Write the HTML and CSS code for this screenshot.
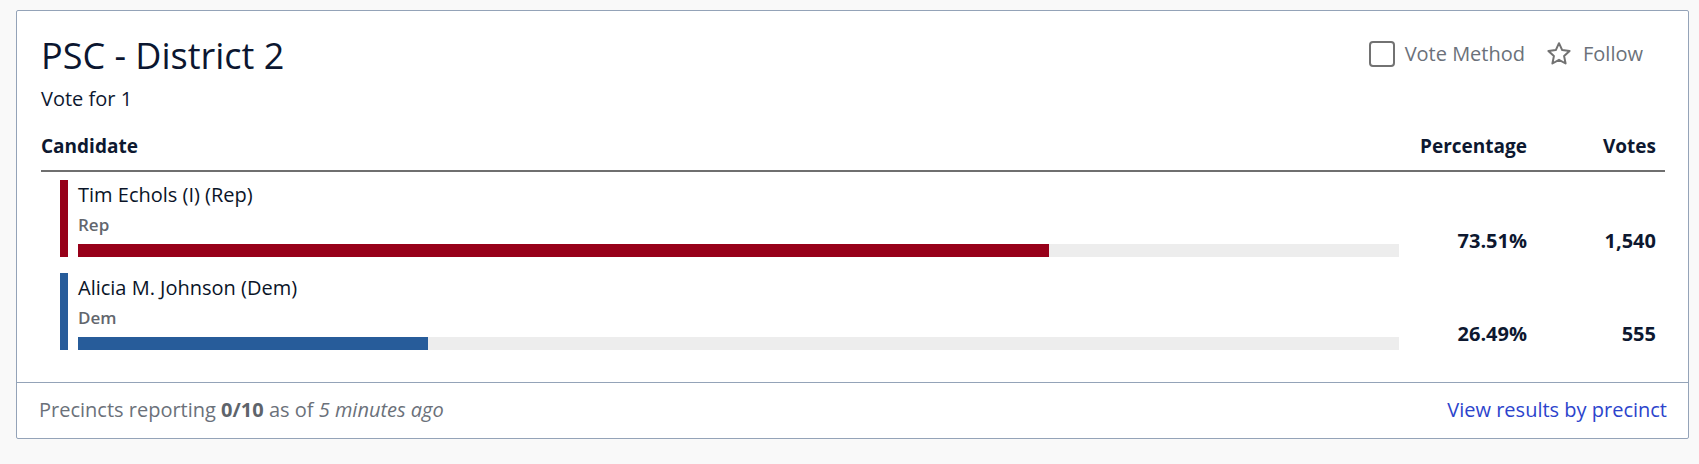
FILE: index.html
```html
<!DOCTYPE html>
<html lang="en">
<head>
<meta charset="utf-8">
<title>PSC - District 2</title>
<link rel="stylesheet" href="styles.css">
</head>
<body>
<div class="card">
  <div class="card-body">
    <div class="head">
      <div class="head-text">
        <h2 class="title">PSC - District 2</h2>
        <div class="vote-for">Vote for 1</div>
      </div>
      <div class="actions">
        <label class="action"><span class="checkbox"></span><span>Vote Method</span></label>
        <button class="action follow" type="button">
          <svg class="star" viewBox="0 0 26 26" width="26" height="26" aria-hidden="true"><path d="M13 2.2l3.2 6.9 7.4.9-5.5 5.1 1.5 7.4L13 18.8l-6.6 3.7 1.5-7.4L2.4 10l7.4-.9z"/></svg>
          <span>Follow</span>
        </button>
      </div>
    </div>
    <div class="results">
      <div class="th">Candidate</div>
      <div class="th num">Percentage</div>
      <div class="th num votes">Votes</div>

      <div class="cell cand-cell">
        <div class="cand rep">
          <div class="name">Tim Echols (I) (Rep)</div>
          <div class="party">Rep</div>
          <div class="bar"><div class="fill" style="width:73.51%"></div></div>
        </div>
      </div>
      <div class="cell num">73.51%</div>
      <div class="cell num votes">1,540</div>

      <div class="cell cand-cell">
        <div class="cand dem">
          <div class="name">Alicia M. Johnson (Dem)</div>
          <div class="party">Dem</div>
          <div class="bar"><div class="fill" style="width:26.49%"></div></div>
        </div>
      </div>
      <div class="cell num">26.49%</div>
      <div class="cell num votes">555</div>
    </div>
  </div>
  <div class="card-footer">
    <div class="reporting">Precincts reporting <strong>0/10</strong> as of <em>5 minutes ago</em></div>
    <a class="precinct-link" href="#">View results by precinct</a>
  </div>
</div>
</body>
</html>
```

FILE: styles.css
```css
html, body {
  margin: 0;
  padding: 0;
  background: #f9f9f9;
}

body {
  font-family: "Open Sans", "Noto Sans", sans-serif;
  color: #0d1830;
  padding-top: 10px;
  padding-left: 16px;
}

.card {
  box-sizing: border-box;
  width: 1673px;
  background: #ffffff;
  border: 1px solid #94a3b8;
  border-radius: 2px;
}

.card-body {
  padding: 23px 23px 24px 24px;
}

.head {
  display: flex;
  justify-content: space-between;
  align-items: flex-start;
}

.title {
  margin: 0;
  font-size: 36px;
  line-height: 44px;
  font-weight: 500;
  color: #0b1630;
}

.vote-for {
  margin-top: 7px;
  font-size: 20px;
  line-height: 28px;
}

.actions {
  display: flex;
  align-items: center;
  margin-top: 7px;
  margin-right: 22px;
}

.action {
  display: flex;
  align-items: center;
  font-family: inherit;
  font-size: 20px;
  line-height: 26px;
  color: #6b717a;
  background: none;
  border: 0;
  padding: 0;
  cursor: pointer;
}

.checkbox {
  box-sizing: border-box;
  width: 26px;
  height: 26px;
  border: 2.5px solid #727272;
  border-radius: 4px;
  margin-right: 10px;
}

.follow {
  margin-left: 21px;
}

.star {
  margin-right: 11px;
  fill: none;
  stroke: #727272;
  stroke-width: 2;
  stroke-linejoin: round;
}

.results {
  display: grid;
  grid-template-columns: 1fr 128px 138px;
  margin-top: 20px;
}

.th {
  font-size: 19px;
  line-height: 26px;
  font-weight: 700;
  padding-bottom: 11px;
  border-bottom: 2px solid #6f6f6f;
}

.num {
  text-align: right;
}

.votes {
  padding-right: 9px;
}

.cell {
  padding: 8px 0;
}

.cell.num {
  display: flex;
  align-items: flex-end;
  justify-content: flex-end;
  padding-bottom: 10px;
  font-size: 20px;
  line-height: 28px;
  font-weight: 700;
}

.cell.num.votes {
  padding-right: 9px;
}

.cand {
  margin-left: 19px;
  padding: 1px 0 0 10px;
  border-left: 8px solid #970019;
}

.cand.dem {
  border-left-color: #275c9a;
}

.name {
  font-size: 20px;
  line-height: 28px;
  color: #0a1428;
}

.party {
  margin-top: 4px;
  font-size: 17px;
  line-height: 24px;
  font-weight: 600;
  color: #62666d;
}

.bar {
  margin-top: 7px;
  height: 13px;
  background: #ededed;
}

.fill {
  height: 100%;
  background: #970019;
}

.dem .fill {
  background: #275c9a;
}

.card-footer {
  display: flex;
  justify-content: space-between;
  align-items: center;
  border-top: 1px solid #94a3b8;
  padding: 13px 21px 14px 22px;
  font-size: 20px;
  line-height: 28px;
  color: #6b717a;
}

.reporting strong {
  font-weight: 700;
  color: #5e646b;
}

.reporting em {
  font-style: italic;
}

.precinct-link {
  color: #2c44cc;
  text-decoration: none;
}
```
